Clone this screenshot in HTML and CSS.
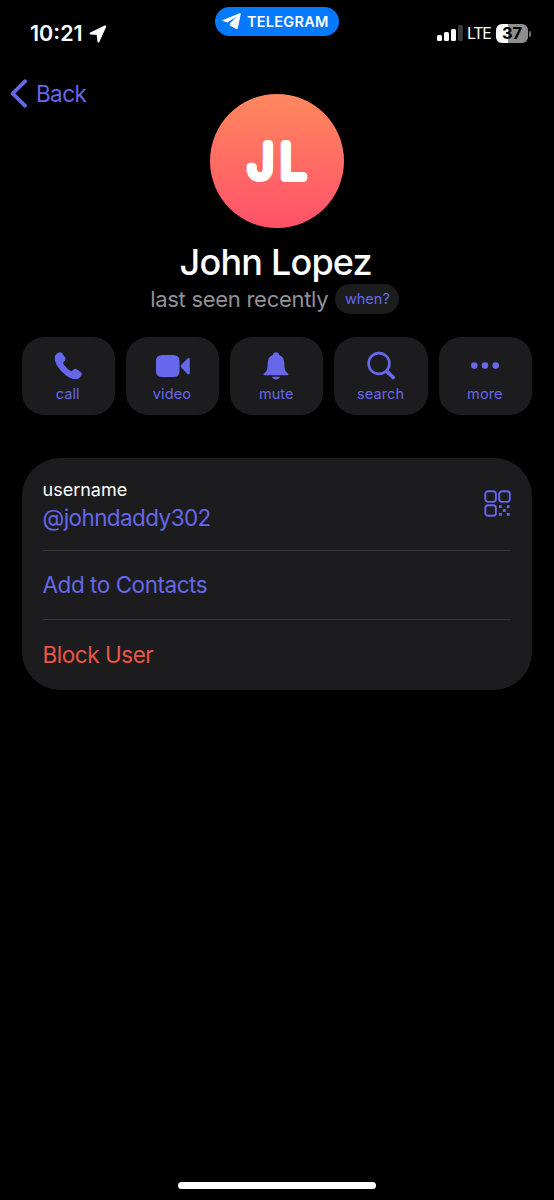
FILE: index.html
```html
<!DOCTYPE html>
<html lang="en">
<head>
  <meta charset="UTF-8" />
  <meta name="viewport" content="width=device-width, initial-scale=1.0" />
  <title>John Lopez</title>
  <link rel="stylesheet" href="styles.css">
</head>
<body>
  <div class="status-bar">
    <div class="status-left">
      <span class="time">10:21</span>
      <svg class="location" width="18" height="18" viewBox="0 0 18 18"><path d="M16.200 1.500 1.600 8.500l7 .5.800 7.500Z" fill="#fff" stroke="#fff" stroke-width="2" stroke-linejoin="round"/></svg>
    </div>
    <div class="app-pill">
      <svg width="19" height="17" viewBox="0 0 19 17"><path d="M17.800.2.900 6.900c-.7.3-.7 1 0 1.200l4.600 1.500L14.800 3.600 8 10.200l-.3 2.300 6.700 3.400c.7.400 1.200.1 1.400-.6L18.800 1c.1-.7-.4-1-1-.8Z" fill="#fff"/></svg>
      <span>TELEGRAM</span>
    </div>
    <div class="status-right">
      <div class="signal"><i></i><i></i><i></i><i class="off"></i></div>
      <span class="network">LTE</span>
      <div class="battery">37</div>
      <div class="battery-tip"></div>
    </div>
  </div>

  <header class="profile-top">
    <a class="back">
      <svg width="17" height="29" viewBox="0 0 17 29"><path d="M15 2.300 2.700 14.500 15 26.700" fill="none" stroke="#6667ea" stroke-width="3.800" stroke-linecap="round" stroke-linejoin="round"/></svg>
      <span>Back</span>
    </a>
    <div class="avatar">
      <svg width="134" height="134" viewBox="0 0 134 134">
        <text class="initials" x="37.500" y="83.500">J</text>
        <text class="initials" x="70" y="83.500">L</text>
      </svg>
    </div>
  </header>

  <main>
    <h1>John Lopez</h1>
    <div class="last-seen">
      <span>last seen recently</span>
      <button class="when">when?</button>
    </div>

    <div class="actions">
      <button class="action">
        <svg width="32" height="32" viewBox="0 0 32 32"><path d="M6.800 2.500c1.300-.6 2.700-.3 3.600 1l2.600 3.800c.9 1.300.7 2.600-.4 3.700l-1.100 1.100c-.5.500-.5 1 0 1.800 1.800 2.900 4 5.100 6.900 6.900.8.500 1.300.5 1.800 0l1.200-1.100c1.100-1 2.400-1.200 3.600-.3l3.700 2.500c1.200.9 1.400 2.100.7 3.300-1.400 2.600-3.400 4-6 4-3.800 0-8.300-2.500-12.700-6.800C6.200 17.900 3 12.900 2.700 8.500c-.2-2.900 1.400-4.900 4.100-6Z"/></svg>
        <span>call</span>
      </button>
      <button class="action">
        <svg class="video" width="36" height="32" viewBox="0 0 36 32"><rect x="2" y="5" width="23.500" height="22" rx="5.500"/><path d="M27.300 14.700 33.500 8.500c.9-.9 2.300-.5 2.300.8v13.800c0 1.300-1.400 1.700-2.300.8l-6.200-6.400c-.8-.9-.8-1.900 0-2.800Z"/></svg>
        <span>video</span>
      </button>
      <button class="action">
        <svg width="32" height="32" viewBox="0 0 32 32"><path d="M16 2.200c1.800 0 3 1.100 3.200 2.700 3.500 1.300 5.100 4.300 5.100 8.100 0 6.700 1.100 8.400 3.400 10.300.8.700 1.100 1.900-.2 1.900h-23c-1.300 0-1-1.200-.2-1.900 2.300-1.900 3.400-3.600 3.400-10.300 0-3.800 1.600-6.800 5.100-8.100.2-1.600 1.400-2.700 3.200-2.700ZM12 26.700h8c-.7 1.700-2 2.700-4 2.700s-3.300-1-4-2.700Z"/></svg>
        <span>mute</span>
      </button>
      <button class="action">
        <svg width="32" height="32" viewBox="0 0 32 32"><g fill="none" stroke="#6667ea" stroke-linecap="round"><circle cx="14" cy="13.500" r="10.400" stroke-width="2.600"/><path d="m21.900 21.400 6.300 6.100" stroke-width="3.800"/></g></svg>
        <span>search</span>
      </button>
      <button class="action">
        <svg width="32" height="32" viewBox="0 0 32 32"><circle cx="5.300" cy="15.600" r="3.300"/><circle cx="16" cy="15.600" r="3.300"/><circle cx="26.700" cy="15.600" r="3.300"/></svg>
        <span>more</span>
      </button>
    </div>

    <div class="card">
      <div class="row username">
        <div>
          <div class="label">username</div>
          <div class="handle">@johndaddy302</div>
        </div>
        <svg class="qr" width="27" height="27" viewBox="0 0 27 27">
          <g fill="none" stroke="#6667ea" stroke-width="1.900"><rect x="1.300" y="1.300" width="10.600" height="10.600" rx="2.800"/><rect x="15.200" y="1.300" width="10.600" height="10.600" rx="2.800"/><rect x="1.300" y="15.200" width="10.600" height="10.600" rx="2.800"/></g>
          <g fill="#6667ea"><rect x="15" y="15.200" width="2.800" height="2.800" rx=".6"/><rect x="22.800" y="15.200" width="2.800" height="2.800" rx=".6"/><rect x="18.900" y="19.100" width="2.800" height="2.800" rx=".6"/><rect x="15" y="23" width="2.800" height="2.800" rx=".6"/><rect x="22.800" y="23" width="2.800" height="2.800" rx=".6"/></g>
        </svg>
      </div>
      <div class="row"><span class="add">Add to Contacts</span></div>
      <div class="row"><span class="block">Block User</span></div>
    </div>
  </main>

  <div class="home-indicator"></div>
</body>
</html>
```
FILE: styles.css
```css
* {
  box-sizing: border-box;
  margin: 0;
  padding: 0;
}

body {
  font-family: 'Inter', sans-serif;
  background: #000;
  color: #fff;
  height: 1200px;
  display: flex;
  flex-direction: column;
  overflow: hidden;
}

button {
  border: none;
  font-family: inherit;
  color: #6667ea;
  background: #1c1c1e;
}

svg {
  display: block;
  flex: none;
}

.status-bar {
  display: grid;
  grid-template-columns: 1fr 124px 1fr;
  height: 94px;
  padding-top: 7px;
  align-items: start;
}

.status-left {
  display: flex;
  align-items: center;
  gap: 6px;
  padding: 14px 0 0 30px;
}

.time {
  font-size: 21.5px;
  line-height: 25px;
  font-weight: 600;
  letter-spacing: 0;
}

.app-pill {
  display: flex;
  align-items: center;
  gap: 6px;
  height: 29px;
  padding-left: 7px;
  border-radius: 15px;
  background: #0479fd;
  font-size: 14.5px;
  font-weight: 600;
  letter-spacing: 0.25px;
}

.status-right {
  display: flex;
  align-items: center;
  padding: 17px 0 0 98px;
}

.signal {
  display: flex;
  align-items: flex-end;
  gap: 2px;
  height: 16px;
  margin-top: -2px;
}

.signal i {
  width: 5px;
  border-radius: 1.5px;
  background: #fff;
  height: 6px;
}

.signal i:nth-child(2) {
  height: 9px;
}

.signal i:nth-child(3) {
  height: 12px;
}

.signal .off {
  height: 16px;
  background: #3a3a3a;
}

.network {
  width: 29px;
  padding-left: 4px;
  font-size: 16px;
  line-height: 19px;
  letter-spacing: -1.3px;
}

.battery {
  margin-left: 4px;
  width: 32px;
  height: 19px;
  border-radius: 6px;
  background: linear-gradient(90deg, #fff 12px, #8e8e8e 12px);
  color: #000;
  font-size: 16.5px;
  line-height: 19px;
  font-weight: 700;
  text-align: center;
}

.battery-tip {
  margin-left: 1px;
  width: 2px;
  height: 6px;
  border-radius: 0 2px 2px 0;
  background: #777;
}

.profile-top {
  display: grid;
  grid-template-columns: 1fr 134px 1fr;
  align-items: start;
  margin-top: -15px;
}

.back {
  display: flex;
  align-items: center;
  gap: 9px;
  padding-left: 10px;
  color: #6667ea;
  font-size: 22.5px;
  line-height: 29px;
  letter-spacing: -0.6px;
}

.avatar {
  margin-top: 15px;
  height: 134px;
  border-radius: 50%;
  background: linear-gradient(#ff885e, #ff516a);
}

.initials {
  font-size: 46px;
  font-weight: 200;
  fill: #fff;
  stroke: #fff;
  stroke-width: 8px;
  stroke-linejoin: round;
}

main {
  padding: 0 22px 0 21.500px;
}

h1 {
  margin-top: 12px;
  margin-right: 2px;
  font-size: 36px;
  line-height: 44px;
  font-weight: 500;
  text-align: center;
  letter-spacing: -0.8px;
}

.last-seen {
  display: flex;
  justify-content: center;
  align-items: center;
  gap: 7px;
  height: 30px;
  margin-right: 4px;
  color: #919195;
  font-size: 22px;
  letter-spacing: -0.28px;
}

.when {
  width: 64px;
  height: 30px;
  padding-bottom: 2px;
  border-radius: 15px;
  font-size: 14.5px;
}

.actions {
  display: grid;
  grid-template-columns: repeat(5, 1fr);
  gap: 11px;
  margin-top: 23px;
}

.action {
  display: flex;
  flex-direction: column;
  align-items: center;
  height: 78px;
  padding-top: 13px;
  padding-right: 1px;
  border-radius: 22px;
  fill: #6667ea;
  font-size: 14.5px;
  line-height: 18px;
  letter-spacing: 0.1px;
}

.action span {
  margin-top: 3px;
}

.card {
  margin-top: 43px;
  height: 232px;
  padding: 0 21px;
  border-radius: 38px;
  background: #1c1c1e;
  color: #6667ea;
  font-size: 22.5px;
  line-height: 28px;
  letter-spacing: -0.46px;
}

.row {
  display: flex;
  align-items: center;
  height: 69px;
}

.row + .row {
  border-top: 1px solid #353537;
}

.row:last-child {
  height: 71px;
}

.username {
  height: 92px;
  padding-bottom: 1px;
  justify-content: space-between;
}

.handle {
  letter-spacing: -0.58px;
}

.label {
  color: #fff;
  font-size: 18px;
  line-height: 28px;
  letter-spacing: 0;
}

.block {
  color: #eb5545;
}

.home-indicator {
  width: 198px;
  height: 7px;
  margin: auto auto 11px;
  border-radius: 4px;
  background: #fff;
}
```
